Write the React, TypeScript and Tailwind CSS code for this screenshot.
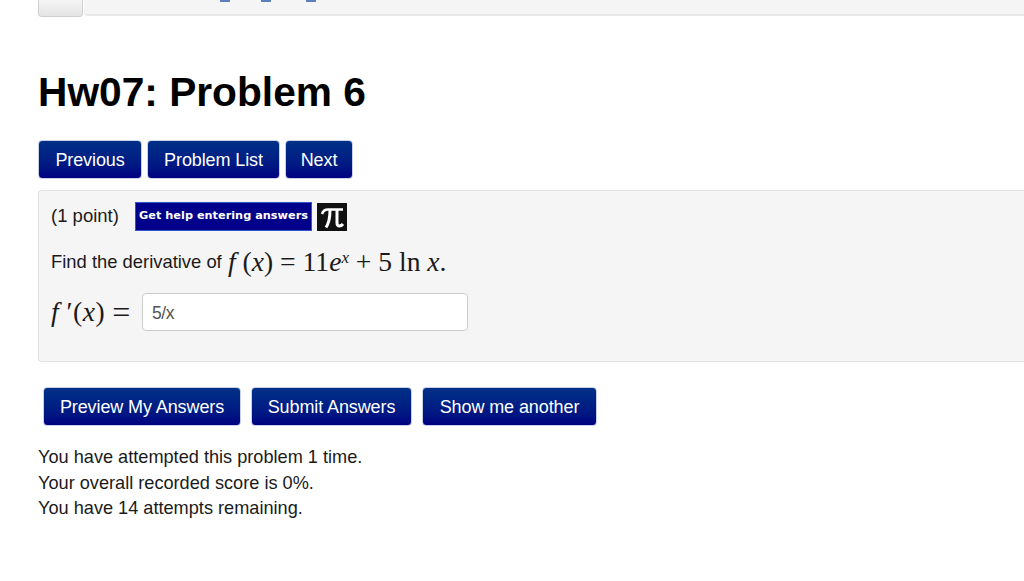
const navBtn =
  "h-[39px] rounded-[4px] border border-[#c9cfe6] bg-gradient-to-b from-[#003087] to-[#000080] text-white text-[18px] leading-none flex items-center justify-center tracking-[-0.1px]";
const math = "font-['Liberation_Serif',serif]";

export default function App() {
  return (
    <div className="h-[581px] w-[1024px] overflow-hidden bg-white font-['Liberation_Sans',Arial,sans-serif] text-[#1a1a1a]">
      <div className="flex h-[17px] pl-[38px]">
        <div className="h-[17px] w-[45px] rounded-b-[4px] border border-t-0 border-[#cfcfcf] bg-gradient-to-b from-[#f5f5f5] to-[#e4e4e4]" />
        <div className="ml-[1px] flex h-[16px] flex-1 rounded-bl-[4px] border-b-2 border-[#e8e8e8] bg-[#f5f5f5] pl-[136px]">
          <span className="h-[2px] w-[10px] bg-[#5a7fbb]" />
          <span className="ml-[31px] h-[2px] w-[10px] bg-[#5a7fbb]" />
          <span className="ml-[35px] h-[2px] w-[10px] bg-[#5a7fbb]" />
        </div>
      </div>

      <h1 className="mt-[52px] ml-[38px] text-[40.7px] font-bold leading-[46px] text-black">Hw07: Problem 6</h1>

      <div className="mt-[25px] ml-[38px] flex gap-[5px]">
        <button className={`${navBtn} w-[104px]`}>Previous</button>
        <button className={`${navBtn} w-[133px]`}>Problem List</button>
        <button className={`${navBtn} w-[68px]`}>Next</button>
      </div>

      <div className="mt-[11px] ml-[38px] h-[172px] rounded-l-[4px] border border-r-0 border-[#e3e3e3] bg-[#f5f5f5] pl-[12px] pt-[11px]">
        <div className="flex h-[29px] items-center">
          <span className="w-[68px] text-[18.5px] leading-none">(1 point)</span>
          <span className="ml-[16px] flex h-[29px] w-[177px] items-center justify-center border border-[#2b57c9] bg-[#00008b] font-['DejaVu_Sans',sans-serif] text-[11.3px] font-bold text-white">
            Get help entering answers
          </span>
          <svg viewBox="0 0 30 28" className="ml-[5px] h-[28px] w-[30px] bg-[#111]" fill="none" stroke="white" aria-label="π">
            <path d="M5 11 C6 8 8 6.5 11 6.5 L26 6.5" strokeWidth="2.6" />
            <path d="M13 7 C13 14 12 20 9 24.5" strokeWidth="3" />
            <path d="M20 7 L20 20 C20 23.5 23.5 24 26 21" strokeWidth="3" />
          </svg>
        </div>
        <div className="mt-[15px] flex h-[32px] items-center">
          <span className="w-[171px] text-[18.4px] leading-none whitespace-nowrap">Find the derivative of</span>
          <span className={`${math} ml-[6px] whitespace-pre text-[27.6px] leading-none`}>
            <i>f</i> (<i>x</i>) = 11<i>e</i><sup className="text-[17px]"><i>x</i></sup> + 5 ln <i>x</i>.
          </span>
        </div>
        <div className="mt-[15px] flex items-center">
          <span className={`${math} flex w-[81px] items-center whitespace-pre text-[27.6px] leading-none`}>
            <span className="tracking-[0.5px]"><i>f</i> ′(<i>x</i>)</span>
            <span className="ml-[7px] text-[32px]">=</span>
          </span>
          <input
            readOnly
            value="5/x"
            className="ml-[10px] h-[38px] w-[326px] rounded-[4px] border border-[#cccccc] bg-white px-[9px] pt-[2px] text-[17.5px] tracking-[-0.4px] text-[#555] outline-none"
          />
        </div>
      </div>

      <div className="mt-[25px] ml-[43px] flex gap-[10px]">
        <button className={`${navBtn} w-[198px]`}>Preview My Answers</button>
        <button className={`${navBtn} w-[161px]`}>Submit Answers</button>
        <button className={`${navBtn} w-[175px]`}>Show me another</button>
      </div>

      <div className="mt-[19px] ml-[38px] text-[18.17px] leading-[25.5px]">
        <p>You have attempted this problem 1 time.</p>
        <p>Your overall recorded score is 0%.</p>
        <p>You have 14 attempts remaining.</p>
      </div>
    </div>
  );
}
